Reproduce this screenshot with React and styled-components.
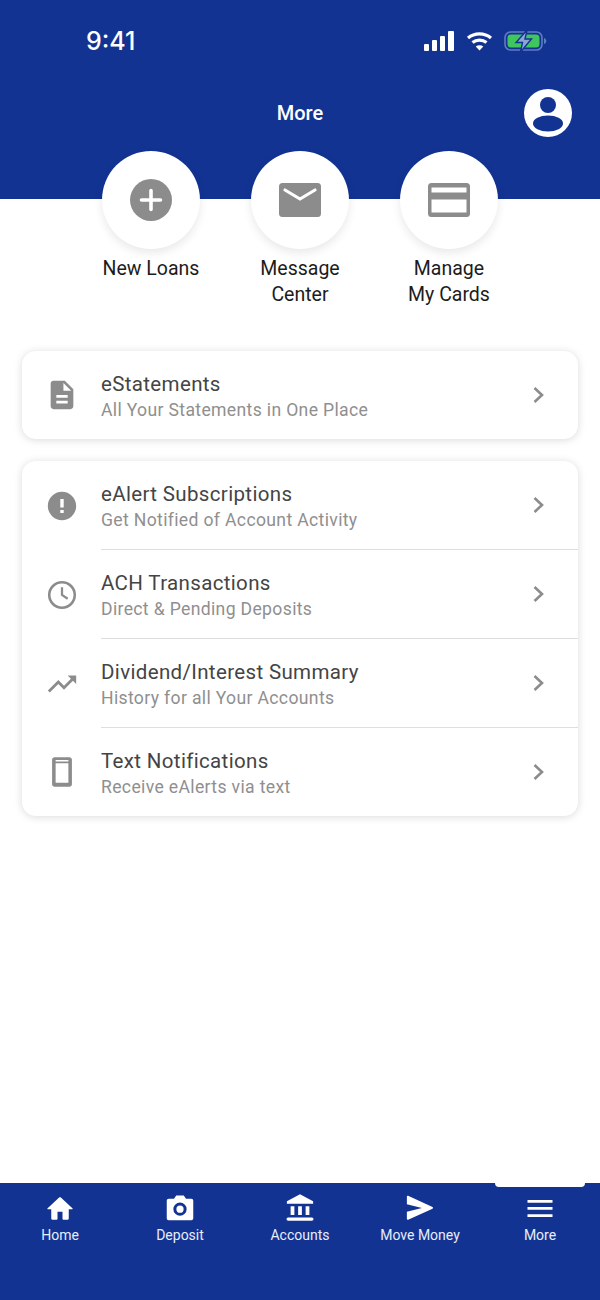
import React from "react";
import styled, { createGlobalStyle } from "styled-components";

const BLUE = "#123392";
const GREY = "#8c8c8c";

const GlobalStyle = createGlobalStyle`
  html, body {
    margin: 0;
    padding: 0;
    background: #fff;
    font-family: Roboto, "Liberation Sans", sans-serif;
  }
  * { box-sizing: border-box; }
`;

const Screen = styled.div`
  width: 600px;
  height: 1300px;
  display: flex;
  flex-direction: column;
  overflow: hidden;
  background: #fff;
`;

const Header = styled.header`
  height: 199px;
  flex: none;
  background: ${BLUE};
  color: #fff;
  padding: 24px 28px 0 86px;
`;

const StatusBar = styled.div`
  height: 34px;
  display: flex;
  align-items: center;
  justify-content: space-between;
  padding-right: 25px;
`;

const Clock = styled.span`
  font-family: Inter, Roboto, sans-serif;
  font-size: 25px;
  font-weight: 500;
`;

const StatusIcons = styled.div`
  display: flex;
  align-items: center;
  gap: 11px;
`;

const NavBar = styled.div`
  margin: 31px 0 0 -86px;
  padding-left: 28px;
  display: grid;
  grid-template-columns: 1fr auto 1fr;
  align-items: center;
  height: 48px;
`;

const Title = styled.h1`
  grid-column: 2;
  margin: 0;
  font-size: 20px;
  font-weight: 500;
`;

const Avatar = styled.svg`
  grid-column: 3;
  justify-self: end;
  width: 48px;
  height: 48px;
`;

const Actions = styled.div`
  margin-top: -48px;
  display: grid;
  grid-template-columns: repeat(3, 149px);
  justify-content: center;
  position: relative;
`;

const Action = styled.div`
  display: flex;
  flex-direction: column;
  align-items: center;
  gap: 7px;
`;

const ActionCircle = styled.div`
  width: 98px;
  height: 98px;
  border-radius: 50%;
  background: #fff;
  display: flex;
  align-items: center;
  justify-content: center;
  box-shadow: 0 4px 10px rgba(0, 0, 0, 0.09);
`;

const ActionLabel = styled.div`
  font-size: 19.5px;
  line-height: 26px;
  color: #1c1c1c;
  text-align: center;
  white-space: pre-line;
`;

const Content = styled.main`
  flex: 1;
  padding: 43px 22px 0;
  display: flex;
  flex-direction: column;
  gap: 22px;
`;

const Card = styled.section`
  background: #fff;
  border-radius: 14px;
  box-shadow: 0 1px 8px rgba(0, 0, 0, 0.15);
`;

const Row = styled.div`
  display: flex;
  height: ${(p) => (p.$last ? 88 : 89)}px;
`;

const RowIcon = styled.div`
  flex: none;
  width: 79px;
  padding-left: 23px;
  display: flex;
  align-items: center;
`;

const RowBody = styled.div`
  flex: 1;
  display: flex;
  align-items: center;
  justify-content: space-between;
  padding-right: 32px;
  border-bottom: ${(p) => (p.$last ? "none" : "1px solid #dedede")};
`;

const RowText = styled.div`
  padding-top: 4px;
`;

const RowTitle = styled.div`
  font-size: 20.5px;
  line-height: 26px;
  letter-spacing: 0.35px;
  color: #444;
`;

const RowSub = styled.div`
  font-size: 17.6px;
  line-height: 26px;
  letter-spacing: 0.34px;
  color: #8f8f8f;
`;

const TabBar = styled.nav`
  position: relative;
  height: 117px;
  flex: none;
  background: ${BLUE};
  display: grid;
  grid-template-columns: repeat(5, 120px);
`;

const ActiveMark = styled.div`
  position: absolute;
  top: 0;
  left: 495px;
  width: 90px;
  height: 4px;
  background: #fff;
  border-radius: 0 0 5px 5px;
`;

const Tab = styled.div`
  display: flex;
  flex-direction: column;
  align-items: center;
  padding-top: 10px;
  color: #fff;
`;

const TabLabel = styled.span`
  margin-top: 2px;
  font-size: 14px;
  line-height: 20px;
  color: #e8edfa;
`;

const Icon = ({ size = 34, children }) => (
  <svg width={size} height={size} viewBox="0 0 24 24" fill={GREY}>
    {children}
  </svg>
);

const Chevron = () => (
  <svg width="14" height="20" viewBox="0 0 14 20" fill="none" stroke={GREY} strokeWidth="2.6">
    <path d="M2.5 3l7.5 7-7.5 7" />
  </svg>
);

const rows1 = [
  {
    title: "eStatements",
    sub: "All Your Statements in One Place",
    icon: (
      <Icon>
        <path d="M14 2H6c-1.1 0-2 .9-2 2v16c0 1.1.9 2 2 2h12c1.1 0 2-.9 2-2V8l-6-6zm2 16H8v-2h8v2zm0-4H8v-2h8v2zm-3-5V3.5L18.500 9H13z" />
      </Icon>
    ),
  },
];

const rows2 = [
  {
    title: "eAlert Subscriptions",
    sub: "Get Notified of Account Activity",
    icon: (
      <Icon>
        <path d="M12 2C6.48 2 2 6.48 2 12s4.48 10 10 10 10-4.48 10-10S17.52 2 12 2zm1.2 15h-2.4v-2.2h2.4V17zm0-4h-2.4V7h2.4v6z" />
      </Icon>
    ),
  },
  {
    title: "ACH Transactions",
    sub: "Direct & Pending Deposits",
    icon: (
      <Icon>
        <circle cx="12" cy="12" r="9" fill="none" stroke={GREY} strokeWidth="1.800" />
        <path d="M12 6.500V12l4 2.600" fill="none" stroke={GREY} strokeWidth="1.600" />
      </Icon>
    ),
  },
  {
    title: "Dividend/Interest Summary",
    sub: "History for all Your Accounts",
    icon: (
      <Icon>
        <path d="M16 6l2.290 2.290-4.880 4.880-4-4L2 16.590 3.410 18l6-6 4 4 6.300-6.290L22 12V6z" />
      </Icon>
    ),
  },
  {
    title: "Text Notifications",
    sub: "Receive eAlerts via text",
    icon: (
      <Icon>
        <path
          fillRule="evenodd"
          d="M6.800 1.500h10.400c1 0 1.800.8 1.800 1.800v17.400c0 1-.8 1.800-1.800 1.800H6.800c-1 0-1.800-.8-1.800-1.800V3.300c0-1 .8-1.800 1.800-1.800zM7.500 3.600v1h9v-1zM7.500 5.800v13.700h9V5.800z"
        />
      </Icon>
    ),
  },
];

const tabs = [
  {
    label: "Home",
    icon: (
      <path d="M10 20.500a.8.8 0 0 1-.8.8H6a1 1 0 0 1-1-1V13H2.400c-.5 0-.7-.6-.3-.9L11.300 3.600c.4-.4 1-.4 1.400 0l9.200 8.500c.4.300.2.900-.3.900H19v7.300a1 1 0 0 1-1 1h-3.200a.8.8 0 0 1-.8-.8V15h-4v5.500z" />
    ),
  },
  {
    label: "Deposit",
    icon: (
      <path
        fillRule="evenodd"
        d="M9 2h6l1.800 2.600H21c1 0 1.600.7 1.600 1.600v14c0 1-.7 1.600-1.600 1.600H3c-1 0-1.600-.7-1.600-1.600v-14c0-1 .7-1.600 1.600-1.600h4.200L9 2zm3 5.600a5.300 5.300 0 1 0 0 10.600 5.300 5.300 0 0 0 0-10.600zm0 2.400a2.900 2.900 0 1 1 0 5.800 2.900 2.900 0 0 1 0-5.800z"
      />
    ),
  },
  {
    label: "Accounts",
    icon: (
      <path d="M12 1l10.500 5.600v1.900h-21V6.600L12 1zM4.500 10.500h3v7h-3v-7zm6 0h3v7h-3v-7zm6 0h3v7h-3v-7zM2.500 19.500h19a1.300 1.300 0 0 1 0 2.600h-19a1.300 1.300 0 0 1 0-2.600z" />
    ),
  },
  {
    label: "Move Money",
    icon: <path d="M1.500 2.800c0-.5.5-.8 1-.6L22 11.200c.5.300.5 1 0 1.300L2.500 21.400c-.5.200-1-.1-1-.6V15l12-3-12-3V2.800z" />,
  },
  {
    label: "More",
    icon: <path d="M2 5.600h20v2.200H2V5.600zm0 5.600h20v2.200H2v-2.200zm0 5.800h20v2.200H2V17z" />,
  },
];

const MenuRow = ({ row, last }) => (
  <Row $last={last}>
    <RowIcon>{row.icon}</RowIcon>
    <RowBody $last={last}>
      <RowText>
        <RowTitle>{row.title}</RowTitle>
        <RowSub>{row.sub}</RowSub>
      </RowText>
      <Chevron />
    </RowBody>
  </Row>
);

export default function App() {
  return (
    <Screen>
      <GlobalStyle />
      <Header>
        <StatusBar>
          <Clock>9:41</Clock>
          <StatusIcons>
            <svg width="32" height="20" viewBox="0 0 32 20" fill="#fff">
              <rect x="1" y="13" width="5" height="7" rx="1" />
              <rect x="9" y="9" width="5" height="11" rx="1" />
              <rect x="17" y="5" width="5" height="15" rx="1" />
              <rect x="25" y="0" width="6" height="20" rx="1" />
            </svg>
            <svg width="27" height="20" viewBox="0 0 27 20" fill="none" stroke="#fff" strokeWidth="3.2">
              <path d="M2 7c6.500-5.500 16.500-5.500 23 0" />
              <path d="M6.500 11.500c4-3.300 10-3.300 14 0" />
              <path d="M13.500 19.500l-3.800-4c2.200-1.700 5.400-1.700 7.600 0z" fill="#fff" stroke="none" />
            </svg>
            <svg width="43" height="22" viewBox="0 0 43 22">
              <rect x="1" y="2" width="37" height="18" rx="5.500" fill="none" stroke="#5f7cc0" strokeWidth="1.600" />
              <rect x="3.500" y="4.500" width="32" height="13" rx="3.500" fill="#3fc65c" />
              <path d="M40 8c1.500.5 2.300 1.500 2.300 3s-.8 2.500-2.300 3z" fill="#5f7cc0" />
              <path d="M23 0L12 12.500h6.500L16.500 22l11-13h-6.500z" fill="#8ea3d6" stroke={BLUE} strokeWidth="1.400" />
            </svg>
          </StatusIcons>
        </StatusBar>
        <NavBar>
          <Title>More</Title>
          <Avatar viewBox="0 0 48 48">
            <circle cx="24" cy="24" r="24" fill="#fff" />
            <circle cx="24" cy="16" r="8" fill={BLUE} />
            <ellipse cx="24" cy="34.500" rx="15" ry="8" fill={BLUE} />
          </Avatar>
        </NavBar>
      </Header>
      <Actions>
        <Action>
          <ActionCircle>
            <svg width="42" height="42" viewBox="0 0 42 42">
              <circle cx="21" cy="21" r="21" fill={GREY} />
              <path d="M21 11.500v19M11.500 21h19" stroke="#fff" strokeWidth="3.600" strokeLinecap="round" />
            </svg>
          </ActionCircle>
          <ActionLabel>New Loans</ActionLabel>
        </Action>
        <Action>
          <ActionCircle>
            <svg width="42" height="34" viewBox="0 0 42 34">
              <rect width="42" height="34" rx="3.500" fill={GREY} />
              <path d="M6 7l15 9 15-9" fill="none" stroke="#fff" strokeWidth="3.200" strokeLinecap="round" />
            </svg>
          </ActionCircle>
          <ActionLabel>{"Message\nCenter"}</ActionLabel>
        </Action>
        <Action>
          <ActionCircle>
            <svg width="42" height="34" viewBox="0 0 42 34" fill={GREY}>
              <path
                fillRule="evenodd"
                d="M3.500 0h35A3.500 3.500 0 0 1 42 3.500v27a3.500 3.500 0 0 1-3.500 3.500h-35A3.500 3.500 0 0 1 0 30.500v-27A3.500 3.500 0 0 1 3.500 0zM3.500 4.500v5h35v-5zM3.500 16.500v13h35v-13z"
              />
            </svg>
          </ActionCircle>
          <ActionLabel>{"Manage\nMy Cards"}</ActionLabel>
        </Action>
      </Actions>
      <Content>
        <Card>
          {rows1.map((row) => (
            <MenuRow key={row.title} row={row} last />
          ))}
        </Card>
        <Card>
          {rows2.map((row, i) => (
            <MenuRow key={row.title} row={row} last={i === rows2.length - 1} />
          ))}
        </Card>
      </Content>
      <TabBar>
        <ActiveMark />
        {tabs.map((tab) => (
          <Tab key={tab.label}>
            <svg width="30" height="30" viewBox="0 0 24 24" fill="#fff">
              {tab.icon}
            </svg>
            <TabLabel>{tab.label}</TabLabel>
          </Tab>
        ))}
      </TabBar>
    </Screen>
  );
}
